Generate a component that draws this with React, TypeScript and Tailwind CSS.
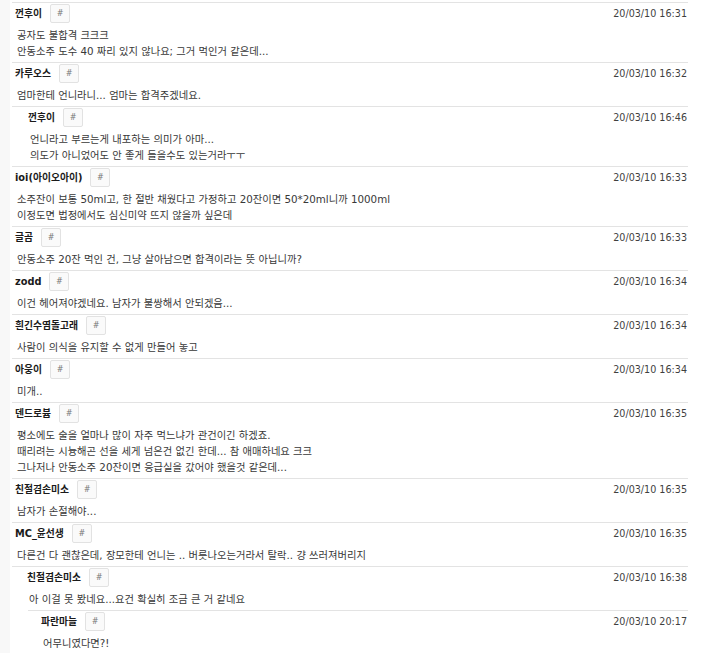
import React from "react";

/* ── comment data ─────────────────────────────────────────────── */
interface Comment {
  name: string;
  time: string;
  lines: string[];
  indent?: number; // extra content indent (px)
  borderIndent?: number; // where the top rule starts
}

const COMMENTS: Comment[] = [
  {
    name: "껀후이",
    time: "20/03/10 16:31",
    lines: ["공자도 불합격 크크크", "안동소주 도수 40 짜리 있지 않나요; 그거 먹인거 같은데..."],
  },
  {
    name: "카루오스",
    time: "20/03/10 16:32",
    lines: ["엄마한테 언니라니... 엄마는 합격주겠네요."],
  },
  {
    name: "껀후이",
    time: "20/03/10 16:46",
    lines: ["언니라고 부르는게 내포하는 의미가 아마...", "의도가 아니었어도 안 좋게 들을수도 있는거라ㅜㅜ"],
    indent: 13,
  },
  {
    name: "ioi(아이오아이)",
    time: "20/03/10 16:33",
    lines: [
      "소주잔이 보통 50ml고, 한 절반 채웠다고 가정하고 20잔이면 50*20ml니까 1000ml",
      "이정도면 법정에서도 심신미약 뜨지 않을까 싶은데",
    ],
  },
  {
    name: "글곰",
    time: "20/03/10 16:33",
    lines: ["안동소주 20잔 먹인 건, 그냥 살아남으면 합격이라는 뜻 아닙니까?"],
  },
  {
    name: "zodd",
    time: "20/03/10 16:34",
    lines: ["이건 헤어져야겠네요. 남자가 불쌍해서 안되겠음..."],
  },
  {
    name: "흰긴수염돌고래",
    time: "20/03/10 16:34",
    lines: ["사람이 의식을 유지할 수 없게 만들어 놓고"],
  },
  {
    name: "아웅이",
    time: "20/03/10 16:34",
    lines: ["미개.."],
  },
  {
    name: "덴드로븀",
    time: "20/03/10 16:35",
    lines: [
      "평소에도 술을 얼마나 많이 자주 먹느냐가 관건이긴 하겠죠.",
      "때리려는 시늉해곤 선을 세게 넘은건 없긴 한데... 참 애매하네요 크크",
      "그나저나 안동소주 20잔이면 응급실을 갔어야 했을것 같은데...",
    ],
  },
  {
    name: "친절겸손미소",
    time: "20/03/10 16:35",
    lines: ["남자가 손절해야..."],
  },
  {
    name: "MC_윤선생",
    time: "20/03/10 16:35",
    lines: ["다른건 다 괜찮은데, 장모한테 언니는 .. 버릇나오는거라서 탈락.. 걍 쓰러져버리지"],
  },
  {
    name: "친절겸손미소",
    time: "20/03/10 16:38",
    lines: ["아 이걸 못 봤네요...요건 확실히 조금 큰 거 같네요"],
    indent: 12,
  },
  {
    name: "파란마늘",
    time: "20/03/10 20:17",
    lines: ["어무니였다면?!"],
    indent: 10,
    borderIndent: 16,
  },
];

const FONT = "font-['DejaVu_Sans','Noto_Sans_CJK_KR',sans-serif]";

function CommentRow({ c }: { c: Comment }) {
  const bi = c.borderIndent ?? 0;
  const ind = c.indent ?? 0;
  return (
    <div className="border-t border-[#e3e3e3] pt-px pb-[3px]" style={{ marginLeft: bi }}>
      <div className="flex h-[19px] items-center" style={{ paddingLeft: ind }}>
        <span className="pl-[3px] text-[9.8px] font-bold leading-none text-[#1a1a1a]">{c.name}</span>
        <span className="ml-[8px] flex h-[19px] w-[20px] items-center justify-center rounded-[2px] border border-[#e2e2e2] bg-[#fafafa] text-[8px] text-[#777]">
          #
        </span>
        <span className="ml-auto pr-px text-[9.6px] leading-none text-[#3f3f3f]">{c.time}</span>
      </div>
      <div className="mt-[4px] text-[10.3px] leading-[16px] text-[#383838]" style={{ paddingLeft: 5 + ind }}>
        {c.lines.map((l, i) => (
          <div key={i} className="whitespace-nowrap">
            {l}
          </div>
        ))}
      </div>
    </div>
  );
}

export default function App() {
  return (
    <div className={`flex h-[653px] w-[720px] overflow-hidden bg-white ${FONT}`}>
      <div className="w-[10px] shrink-0 bg-[#f8f8f8]" />
      <div className="ml-[2px] w-[676px] shrink-0 pt-[2px]">
        {COMMENTS.map((c, i) => (
          <CommentRow key={i} c={c} />
        ))}
      </div>
    </div>
  );
}
